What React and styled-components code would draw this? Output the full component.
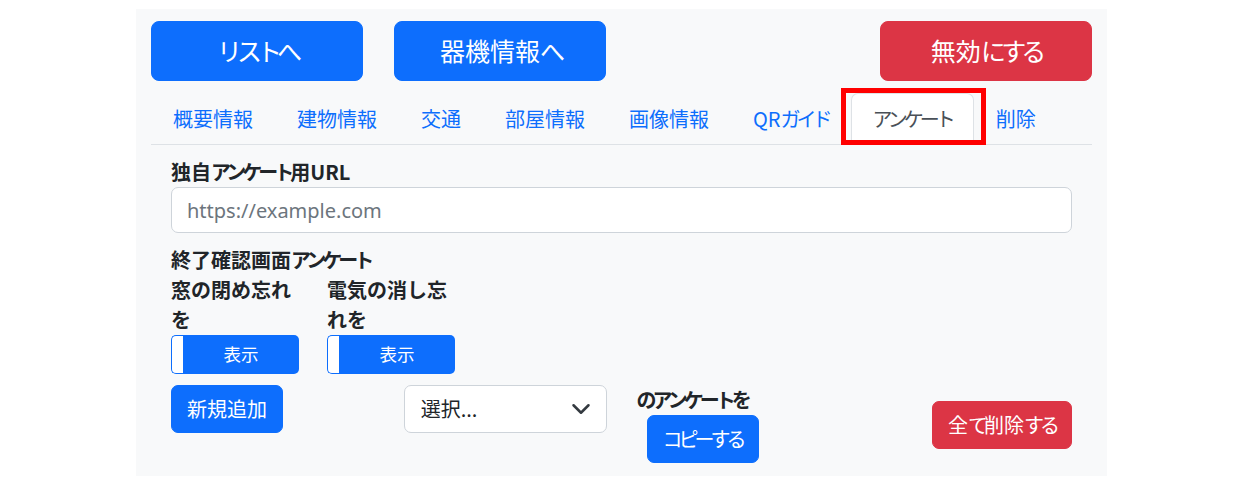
import React from "react";
import styled, { createGlobalStyle, css } from "styled-components";

const Global = createGlobalStyle`
  html, body { margin: 0; padding: 0; background: #ffffff; }
  body {
    font-family: "Noto Sans CJK JP", "Noto Sans", sans-serif;
    color: #212529;
    font-size: 20px;
    line-height: 1.5;
  }
  * { box-sizing: border-box; }
`;

/* Kana runs are set tighter to follow the proportional kana of the original UI font */
const Kana = styled.span`
  letter-spacing: -0.2em;
`;

const KANA_RUN = /([\u3041-\u309F\u30A0-\u30FF]+)/;

function JText({ children }) {
  return String(children)
    .split(KANA_RUN)
    .map((part, i) => (KANA_RUN.test(part) ? <Kana key={i}>{part}</Kana> : part));
}

const Page = styled.div`
  padding-top: 9px;
`;

const Panel = styled.div`
  margin-left: 136px;
  width: 971px;
  background: #f8f9fa;
  padding: 12px 15px 13px;
`;

const TopBar = styled.div`
  display: flex;
  gap: 31px;
`;

const BigButton = styled.button`
  width: 212px;
  height: 60px;
  border-radius: 8px;
  border: 1px solid ${(p) => (p.$danger ? "#dc3545" : "#0d6efd")};
  background: ${(p) => (p.$danger ? "#dc3545" : "#0d6efd")};
  color: #fff;
  font-family: inherit;
  font-size: 25px;
  line-height: 1.5;
  ${(p) => p.$push && css`margin-left: auto;`}
`;

const Tabs = styled.div`
  display: flex;
  margin-top: 12px;
  border-bottom: 1px solid #dee2e6;
`;

const Tab = styled.div`
  position: relative;
  padding: 10px 21px;
  margin-bottom: -1px;
  border: 1px solid transparent;
  border-top-left-radius: 7px;
  border-top-right-radius: 7px;
  font-size: 20px;
  line-height: 30px;
  color: #0d6efd;
  white-space: nowrap;
  ${(p) =>
    p.$active &&
    css`
      color: #495057;
      background: #fff;
      border-color: #dee2e6 #dee2e6 #fff;
    `}
`;

const Highlight = styled.span`
  position: absolute;
  left: -11px;
  right: -13px;
  top: -6px;
  bottom: -1px;
  border: 5px solid #ff0000;
  pointer-events: none;
`;

const Content = styled.div`
  padding: 12px 20px 0;
`;

const Label = styled.div`
  font-weight: 700;
  font-size: 20px;
  line-height: 30px;
  margin-top: ${(p) => p.$mt || 0}px;
`;

const TextInput = styled.input`
  display: block;
  width: 100%;
  height: 46px;
  padding: 7px 15px;
  font-family: "Noto Sans", sans-serif;
  font-size: 20px;
  line-height: 30px;
  color: #212529;
  background: #fff;
  border: 1px solid #ced4da;
  border-radius: 7px;
  &::placeholder { color: #6c757d; }
`;

const ToggleGrid = styled.div`
  display: grid;
  grid-template-columns: 128px 128px;
  column-gap: 28px;
`;

const ToggleCol = styled.div`
  display: flex;
  flex-direction: column;
  justify-content: flex-end;
`;

const ToggleGroup = styled.div`
  display: flex;
  height: 39px;
`;

const ToggleKnob = styled.span`
  width: 12px;
  background: #fff;
  border: 1px solid #0d6efd;
  border-right: none;
  border-radius: 5px 0 0 5px;
`;

const ToggleButton = styled.span`
  flex: 1;
  display: flex;
  align-items: center;
  justify-content: center;
  background: #0d6efd;
  color: #fff;
  font-size: 17.5px;
  border-radius: 0 5px 5px 0;
`;

const ActionGrid = styled.div`
  display: grid;
  grid-template-columns: repeat(4, 1fr);
  column-gap: 30px;
  margin-top: 11px;
  align-items: start;
`;

const Button = styled.button`
  height: 48px;
  padding: 0 15px;
  border-radius: 7px;
  border: 1px solid ${(p) => (p.$danger ? "#dc3545" : "#0d6efd")};
  background: ${(p) => (p.$danger ? "#dc3545" : "#0d6efd")};
  color: #fff;
  font-family: inherit;
  font-size: 20px;
  line-height: 30px;
  margin-top: ${(p) => p.$mt || 0}px;
  margin-left: ${(p) => p.$ml || 0}px;
  justify-self: ${(p) => (p.$end ? "end" : "start")};
`;

const CopyCol = styled.div`
  display: flex;
  flex-direction: column;
  align-items: flex-start;
`;

const Select = styled.div`
  position: relative;
  height: 48px;
  display: flex;
  align-items: center;
  padding: 0 45px 0 16px;
  background: #fff;
  border: 1px solid #ced4da;
  border-radius: 7px;
  font-size: 20px;
  color: #212529;
`;

const Chevron = styled.svg`
  position: absolute;
  right: 15px;
  top: 50%;
  margin-top: -10px;
  width: 20px;
  height: 20px;
`;

const tabs = ["概要情報", "建物情報", "交通", "部屋情報", "画像情報", "QRガイド", "アンケート", "削除"];

export default function App() {
  return (
    <Page>
      <Global />
      <Panel>
        <TopBar>
          <BigButton><JText>リストへ</JText></BigButton>
          <BigButton><JText>器機情報へ</JText></BigButton>
          <BigButton $danger $push><JText>無効にする</JText></BigButton>
        </TopBar>
        <Tabs>
          {tabs.map((t) => (
            <Tab key={t} $active={t === "アンケート"}>
              <JText>{t}</JText>
              {t === "アンケート" && <Highlight />}
            </Tab>
          ))}
        </Tabs>
        <Content>
          <Label><JText>独自アンケート用URL</JText></Label>
          <TextInput placeholder="https://example.com" />
          <Label $mt={12}><JText>終了確認画面アンケート</JText></Label>
          <ToggleGrid>
            <ToggleCol>
              <Label>窓の閉め忘れを</Label>
              <ToggleGroup>
                <ToggleKnob />
                <ToggleButton>表示</ToggleButton>
              </ToggleGroup>
            </ToggleCol>
            <ToggleCol>
              <Label>電気の消し忘れを</Label>
              <ToggleGroup>
                <ToggleKnob />
                <ToggleButton>表示</ToggleButton>
              </ToggleGroup>
            </ToggleCol>
          </ToggleGrid>
          <ActionGrid>
            <Button>新規追加</Button>
            <Select>
              選択...
              <Chevron viewBox="0 0 16 16">
                <path d="m2 5 6 6 6-6" fill="none" stroke="#343a40" strokeWidth="2" strokeLinecap="round" strokeLinejoin="round" />
              </Chevron>
            </Select>
            <CopyCol>
              <Label><JText>のアンケートを</JText></Label>
              <Button $ml={10}><JText>コピーする</JText></Button>
            </CopyCol>
            <Button $danger $end $mt={16}><JText>全て削除する</JText></Button>
          </ActionGrid>
        </Content>
      </Panel>
    </Page>
  );
}
